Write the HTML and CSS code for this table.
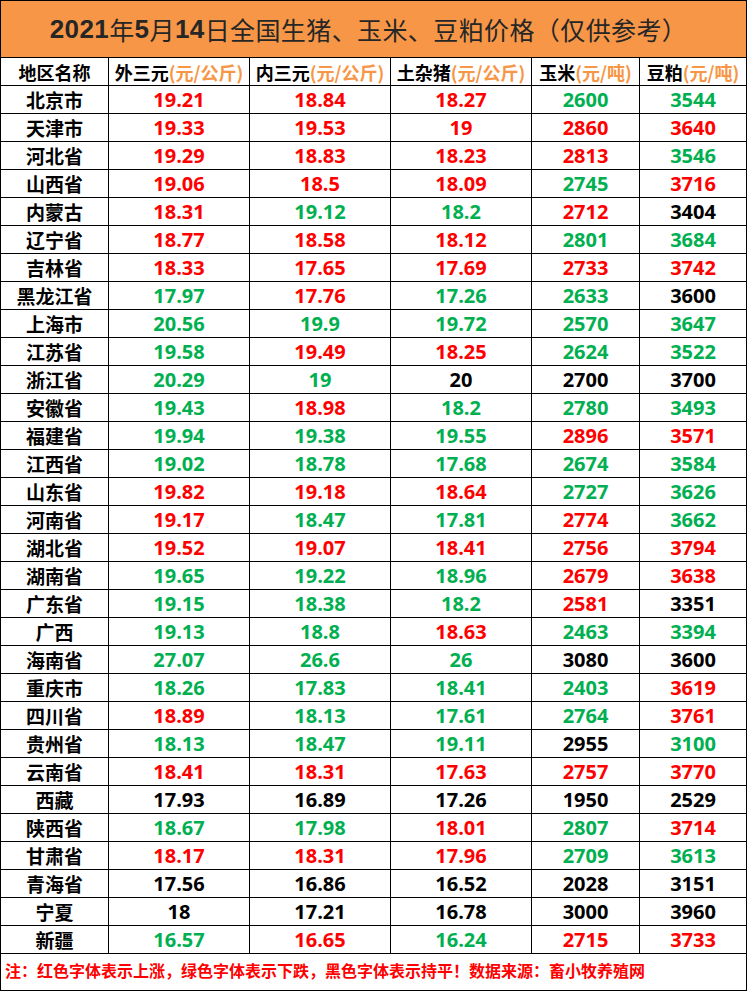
FILE: index.html
```html
<!DOCTYPE html>
<html lang="zh-CN">
<head>
<meta charset="utf-8">
<title>2021年5月14日全国生猪、玉米、豆粕价格</title>
<link rel="stylesheet" href="styles.css">
</head>
<body>
<div class="sheet">
  <div class="title"><span class="num">2021</span>年<span class="num">5</span>月<span class="num">14</span>日全国生猪、玉米、豆粕价格（仅供参考）</div>

  <div class="hd">地区名称</div>
  <div class="hd">外三元<span class="unit">(元/公斤)</span></div>
  <div class="hd">内三元<span class="unit">(元/公斤)</span></div>
  <div class="hd">土杂猪<span class="unit">(元/公斤)</span></div>
  <div class="hd">玉米<span class="unit">(元/吨)</span></div>
  <div class="hd">豆粕<span class="unit">(元/吨)</span></div>

  <div class="name">北京市</div><div class="v r">19.21</div><div class="v r">18.84</div><div class="v r">18.27</div><div class="v g">2600</div><div class="v g">3544</div>
  <div class="name">天津市</div><div class="v r">19.33</div><div class="v r">19.53</div><div class="v r">19</div><div class="v r">2860</div><div class="v r">3640</div>
  <div class="name">河北省</div><div class="v r">19.29</div><div class="v r">18.83</div><div class="v r">18.23</div><div class="v r">2813</div><div class="v g">3546</div>
  <div class="name">山西省</div><div class="v r">19.06</div><div class="v r">18.5</div><div class="v r">18.09</div><div class="v g">2745</div><div class="v r">3716</div>
  <div class="name">内蒙古</div><div class="v r">18.31</div><div class="v g">19.12</div><div class="v g">18.2</div><div class="v r">2712</div><div class="v k">3404</div>
  <div class="name">辽宁省</div><div class="v r">18.77</div><div class="v r">18.58</div><div class="v r">18.12</div><div class="v g">2801</div><div class="v g">3684</div>
  <div class="name">吉林省</div><div class="v r">18.33</div><div class="v r">17.65</div><div class="v r">17.69</div><div class="v r">2733</div><div class="v r">3742</div>
  <div class="name">黑龙江省</div><div class="v g">17.97</div><div class="v r">17.76</div><div class="v g">17.26</div><div class="v g">2633</div><div class="v k">3600</div>
  <div class="name">上海市</div><div class="v g">20.56</div><div class="v g">19.9</div><div class="v g">19.72</div><div class="v g">2570</div><div class="v g">3647</div>
  <div class="name">江苏省</div><div class="v g">19.58</div><div class="v r">19.49</div><div class="v r">18.25</div><div class="v g">2624</div><div class="v g">3522</div>
  <div class="name">浙江省</div><div class="v g">20.29</div><div class="v g">19</div><div class="v k">20</div><div class="v k">2700</div><div class="v k">3700</div>
  <div class="name">安徽省</div><div class="v g">19.43</div><div class="v r">18.98</div><div class="v g">18.2</div><div class="v g">2780</div><div class="v g">3493</div>
  <div class="name">福建省</div><div class="v g">19.94</div><div class="v g">19.38</div><div class="v g">19.55</div><div class="v r">2896</div><div class="v r">3571</div>
  <div class="name">江西省</div><div class="v g">19.02</div><div class="v g">18.78</div><div class="v g">17.68</div><div class="v g">2674</div><div class="v g">3584</div>
  <div class="name">山东省</div><div class="v r">19.82</div><div class="v r">19.18</div><div class="v r">18.64</div><div class="v g">2727</div><div class="v g">3626</div>
  <div class="name">河南省</div><div class="v r">19.17</div><div class="v g">18.47</div><div class="v g">17.81</div><div class="v r">2774</div><div class="v g">3662</div>
  <div class="name">湖北省</div><div class="v r">19.52</div><div class="v r">19.07</div><div class="v r">18.41</div><div class="v r">2756</div><div class="v r">3794</div>
  <div class="name">湖南省</div><div class="v g">19.65</div><div class="v g">19.22</div><div class="v g">18.96</div><div class="v r">2679</div><div class="v r">3638</div>
  <div class="name">广东省</div><div class="v g">19.15</div><div class="v g">18.38</div><div class="v g">18.2</div><div class="v r">2581</div><div class="v k">3351</div>
  <div class="name">广西</div><div class="v g">19.13</div><div class="v g">18.8</div><div class="v r">18.63</div><div class="v g">2463</div><div class="v g">3394</div>
  <div class="name">海南省</div><div class="v g">27.07</div><div class="v g">26.6</div><div class="v g">26</div><div class="v k">3080</div><div class="v k">3600</div>
  <div class="name">重庆市</div><div class="v g">18.26</div><div class="v g">17.83</div><div class="v g">18.41</div><div class="v g">2403</div><div class="v r">3619</div>
  <div class="name">四川省</div><div class="v r">18.89</div><div class="v g">18.13</div><div class="v g">17.61</div><div class="v g">2764</div><div class="v r">3761</div>
  <div class="name">贵州省</div><div class="v g">18.13</div><div class="v g">18.47</div><div class="v g">19.11</div><div class="v k">2955</div><div class="v g">3100</div>
  <div class="name">云南省</div><div class="v r">18.41</div><div class="v r">18.31</div><div class="v r">17.63</div><div class="v r">2757</div><div class="v r">3770</div>
  <div class="name">西藏</div><div class="v k">17.93</div><div class="v k">16.89</div><div class="v k">17.26</div><div class="v k">1950</div><div class="v k">2529</div>
  <div class="name">陕西省</div><div class="v g">18.67</div><div class="v g">17.98</div><div class="v r">18.01</div><div class="v g">2807</div><div class="v r">3714</div>
  <div class="name">甘肃省</div><div class="v r">18.17</div><div class="v r">18.31</div><div class="v r">17.96</div><div class="v g">2709</div><div class="v g">3613</div>
  <div class="name">青海省</div><div class="v k">17.56</div><div class="v k">16.86</div><div class="v k">16.52</div><div class="v k">2028</div><div class="v k">3151</div>
  <div class="name">宁夏</div><div class="v k">18</div><div class="v k">17.21</div><div class="v k">16.78</div><div class="v k">3000</div><div class="v k">3960</div>
  <div class="name">新疆</div><div class="v g">16.57</div><div class="v r">16.65</div><div class="v g">16.24</div><div class="v r">2715</div><div class="v r">3733</div>

  <div class="note">注：红色字体表示上涨，绿色字体表示下跌，黑色字体表示持平！数据来源：畜小牧养殖网</div>
</div>
</body>
</html>
```

FILE: styles.css
```css
html, body {
  margin: 0;
  padding: 0;
  background: #ffffff;
}

.sheet {
  display: grid;
  grid-template-columns: 107px 140px 140px 140px 107px 106px;
  grid-template-rows: 56px 27px repeat(31, 27px) 36px;
  gap: 1px;
  padding: 1px;
  width: max-content;
  background: #000000;
  font-family: "Noto Sans CJK SC", "Noto Sans", sans-serif;
}

.sheet > div {
  background: #ffffff;
  display: flex;
  align-items: center;
  justify-content: center;
  white-space: nowrap;
  overflow: hidden;
}

.sheet > .title {
  grid-column: 1 / -1;
  background: #f79646;
  color: #262626;
  font-size: 25px;
  font-weight: 400;
  letter-spacing: 0.4px;
  padding-right: 10px;
}

.title .num {
  font-family: "Liberation Sans", Arial, sans-serif;
  font-weight: 700;
  font-size: 26px;
}

.hd {
  font-size: 18px;
  font-weight: 700;
  color: #000000;
}

.unit {
  color: #f79646;
}

.name {
  font-size: 19px;
  font-weight: 700;
  color: #000000;
}

.v {
  font-family: "Open Sans", "Noto Sans", sans-serif;
  font-size: 20px;
  font-weight: 700;
}

.r { color: #ff0000; }
.g { color: #00b050; }
.k { color: #000000; }

.sheet > .note {
  grid-column: 1 / -1;
  justify-content: flex-start;
  padding-left: 4px;
  padding-bottom: 4px;
  color: #ff0000;
  font-size: 16px;
  font-weight: 700;
}
```
